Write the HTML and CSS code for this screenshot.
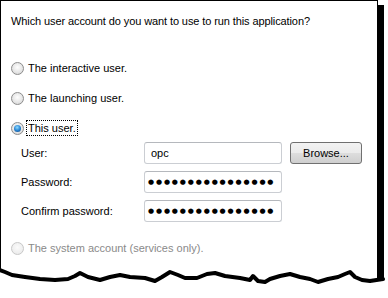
FILE: index.html
```html
<!DOCTYPE html>
<html lang="en">

<head>
  <meta charset="UTF-8">
  <title>Run As</title>
  <link rel="stylesheet" href="styles.css">
</head>

<body>
  <div class="frame">
    <div class="panel">
      <p class="question">Which user account do you want to use to run this application?</p>

      <div class="options">
        <label class="option"><span class="radio"></span>The interactive user.</label>
        <label class="option"><span class="radio"></span>The launching user.</label>
        <label class="option"><span class="radio checked"></span><span class="focus">This user.</span></label>
      </div>

      <div class="fields">
        <span class="field-label">User:</span>
        <div class="textbox">opc</div>
        <button class="btn">Browse...</button>

        <span class="field-label">Password:</span>
        <div class="textbox secret">●●●●●●●●●●●●●●●●</div>
        <span></span>

        <span class="field-label">Confirm password:</span>
        <div class="textbox secret">●●●●●●●●●●●●●●●●</div>
        <span></span>
      </div>

      <label class="option disabled"><span class="radio"></span>The system account (services only).</label>
    </div>

    <!-- torn paper edge -->
    <svg class="torn" width="388" height="40" viewBox="0 0 388 40">
      <path fill="#fff" d="M0,12 L5,14 L12,17 L25,19 L40,21 L55,22 L68,21 L75,18 L80,15 L88,19 L100,22 L110,19 L120,17 L130,19 L145,20 L155,23 L162,19 L170,14 L178,17 L185,20 L197,20 L207,16 L215,15 L225,18 L240,20 L250,22 L253,18 L258,23 L265,24 L270,21 L280,18 L290,16 L300,19 L310,21 L318,24 L328,21 L338,19 L345,16 L350,14 L355,19 L362,22 L370,23 L384,21 L388,21 L388,40 L0,40 Z" />
      <polyline fill="none" stroke="#000" stroke-width="4" stroke-linejoin="round" stroke-linecap="round" points="0,12 5,14 12,17 25,19 40,21 55,22 68,21 75,18 80,15 88,19 100,22 110,19 120,17 130,19 145,20 155,23 162,19 170,14 178,17 185,20 197,20 207,16 215,15 225,18 240,20 250,22 253,18 258,23 265,24 270,21 280,18 290,16 300,19 310,21 318,24 328,21 338,19 345,16 350,14 355,19 362,22 370,23 383,21" />
    </svg>
  </div>
</body>

</html>
```

FILE: styles.css
```css
body {
  margin: 0;
  background: #fff;
  font-family: 'Liberation Sans', Arial, sans-serif;
  font-size: 11px;
  color: #000;
}

.frame {
  position: relative;
  width: 388px;
  height: 298px;
  overflow: hidden;
}

.panel {
  box-sizing: border-box;
  width: 378px;
  height: 280px;
  border: 1px solid #000;
  border-bottom: none;
  box-shadow: 6px 5px 0 #000;
  background: #fff;
  padding: 12px 0 0 10px;
}

.question {
  margin: 0;
  line-height: 16px;
  letter-spacing: -0.1px;
}

.options {
  display: flex;
  flex-direction: column;
  gap: 8px;
  margin-top: 28px;
}

.option {
  display: flex;
  align-items: center;
  height: 22px;
}

.option.disabled {
  margin-top: 15px;
  color: #8a8a8a;
}

.radio {
  position: relative;
  box-sizing: border-box;
  flex: none;
  width: 13px;
  height: 13px;
  margin-right: 4px;
  border: 1px solid #8c8c8c;
  border-radius: 50%;
  background: radial-gradient(circle at 50% 40%, #fefefe, #e4e4e4 60%, #cdcdcd);
}

.radio.checked::after {
  content: '';
  position: absolute;
  inset: 2px;
  border-radius: 50%;
  background: radial-gradient(circle at 45% 35%, #8edcff, #2a86d4 50%, #0e3f78);
}

.disabled .radio {
  border-color: #c8c8c8;
  background: radial-gradient(circle at 50% 40%, #fbfbfb, #efefef 60%, #e6e6e6);
}

.focus {
  outline: 1px dotted #000;
  outline-offset: 1px;
}

.fields {
  display: grid;
  grid-template-columns: 115px 138px 72px;
  grid-auto-rows: 22px;
  column-gap: 8px;
  row-gap: 7px;
  align-items: center;
  margin: 3px 0 0 10px;
}

.textbox {
  box-sizing: border-box;
  height: 22px;
  display: flex;
  align-items: center;
  padding-left: 6px;
  border: 1px solid #cbced3;
  border-top-color: #b5b8bd;
  border-radius: 3px;
  background: #fff;
}

.textbox.secret {
  padding-left: 3px;
  font-family: 'DejaVu Sans', sans-serif;
  font-size: 7px;
  letter-spacing: 1.85px;
}

.btn {
  box-sizing: border-box;
  height: 22px;
  padding: 0;
  border: 1px solid #707070;
  border-radius: 3px;
  background: linear-gradient(#f3f3f3 0%, #ebebeb 48%, #dddddd 52%, #cfcfcf 100%);
  font-family: 'Liberation Sans', Arial, sans-serif;
  font-size: 11px;
  color: #000;
}

.torn {
  position: absolute;
  left: 0;
  top: 258px;
  display: block;
}
```
